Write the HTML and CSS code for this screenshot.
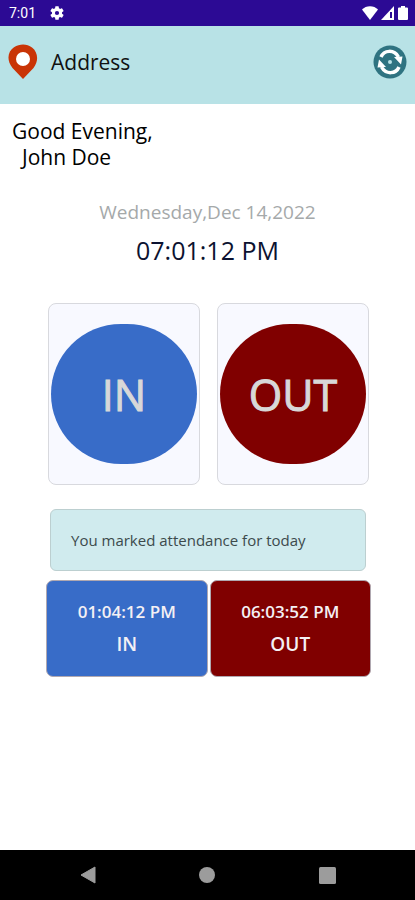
FILE: index.html
```html
<!DOCTYPE html>
<html lang="en">
<head>
    <meta charset="UTF-8">
    <meta name="viewport" content="width=device-width, initial-scale=1.0">
    <title>Attendance</title>
    <link rel="stylesheet" href="styles.css">
</head>
<body>
    <div class="status-bar">
        <span>7:01</span>
        <svg class="gear" width="14" height="14" viewBox="2 2 20 20" fill="#fff"><path d="M19.14 12.94c.04-.3.06-.61.06-.94s-.02-.64-.07-.94l2.03-1.58a.49.49 0 0 0 .12-.61l-1.92-3.32a.49.49 0 0 0-.59-.22l-2.39.96a7 7 0 0 0-1.62-.94l-.36-2.54a.48.48 0 0 0-.48-.41h-3.84a.48.48 0 0 0-.47.41l-.36 2.54c-.59.24-1.13.57-1.62.94l-2.39-.96a.48.48 0 0 0-.59.22L2.74 8.87a.48.48 0 0 0 .12.61l2.03 1.58a6 6 0 0 0 0 1.88l-2.03 1.58a.49.49 0 0 0-.12.61l1.92 3.32c.12.22.37.29.59.22l2.39-.96c.5.38 1.03.7 1.62.94l.36 2.54c.05.24.24.41.48.41h3.84c.24 0 .44-.17.47-.41l.36-2.54a7 7 0 0 0 1.62-.94l2.39.96c.22.08.47 0 .59-.22l1.92-3.32a.48.48 0 0 0-.12-.61zM12 15a3 3 0 1 1 0-6 3 3 0 0 1 0 6z"/></svg>
        <div class="signals">
            <svg width="16" height="14" viewBox="0 0 16 14" fill="#fff"><path d="M0 3.5C4-1 12-1 16 3.500L8 14z"/></svg>
            <svg width="14" height="14" viewBox="0 0 14 14"><path d="M0 14L13 0V14z" fill="#fff"/><path d="M9 6h2v6H9z" fill="#2c0a94"/></svg>
            <svg width="10" height="14" viewBox="0 0 10 14" fill="#fff"><path d="M3 0h4v1.500h2q1 0 1 1V13q0 1-1 1H1q-1 0-1-1V2.500q0-1 1-1h2z"/></svg>
        </div>
    </div>

    <header class="app-bar">
        <svg width="30" height="36" viewBox="0 0 30 36"><path d="M15 35L4.500 24C-2 16 0 7 6 3.200C12-.7 19-.5 24 3.500C30 8 31 17 25.500 24z" fill="#c93406"/><circle cx="15" cy="15" r="7" fill="#fff"/></svg>
        <span class="address">Address</span>
        <button type="button" class="refresh" aria-label="Refresh">
            <svg width="34" height="34" viewBox="0 0 34 34"><circle cx="17" cy="17" r="16.500" fill="#2f7381"/><g fill="none" stroke="#fff" stroke-width="3.500"><path d="M8 12C11 5 21 4 25.500 12"/><path d="M26 22C23 29 13 30 8.500 22"/></g><path d="M21 12L29.500 11.500L28 19.500zM13 22L4.500 22.500L6 14.500z" fill="#fff"/><circle cx="17" cy="17" r="2" fill="#b8e2e6"/></svg>
        </button>
    </header>

    <main>
        <div class="greeting">
            <p>Good Evening,</p>
            <p class="name">John Doe</p>
        </div>

        <p class="date">Wednesday,Dec 14,2022</p>
        <p class="clock">07:01:12 PM</p>

        <div class="cards">
            <div class="card"><button type="button" class="mark in">IN</button></div>
            <div class="card"><button type="button" class="mark out">OUT</button></div>
        </div>

        <p class="notice">You marked attendance for today</p>

        <div class="records">
            <div class="record in"><span class="time">01:04:12 PM</span><span>IN</span></div>
            <div class="record out"><span class="time">06:03:52 PM</span><span>OUT</span></div>
        </div>
    </main>

    <nav class="nav-bar">
        <button type="button" aria-label="Back"><svg width="16" height="18" viewBox="0 0 16 18"><path d="M1 9L15 1V17z" fill="#9c9c9c" stroke="#9c9c9c" stroke-linejoin="round"/></svg></button>
        <button type="button" aria-label="Home"><svg width="16" height="16" viewBox="0 0 16 16"><circle cx="8" cy="8" r="8" fill="#9c9c9c"/></svg></button>
        <button type="button" aria-label="Recent apps"><svg width="17" height="17" viewBox="0 0 17 17"><rect width="17" height="17" rx="1.500" fill="#9c9c9c"/></svg></button>
    </nav>
</body>
</html>
```

FILE: styles.css
```css
* {
    box-sizing: border-box;
}
body {
    display: flex;
    flex-direction: column;
    min-height: 100vh;
    margin: 0;
    background: #fff;
    color: #111;
    font-family: "Open Sans", "Noto Sans", sans-serif;
}
p {
    margin: 0;
}
button {
    padding: 0;
    border: none;
    background: none;
    font-family: inherit;
    cursor: pointer;
}
svg {
    display: block;
}
.status-bar {
    display: flex;
    align-items: center;
    height: 26px;
    padding: 0 7px 0 9px;
    background: #2c0a94;
    color: #fff;
    font-family: Roboto, sans-serif;
    font-size: 14px;
}
.gear {
    margin-left: 14px;
}
.signals {
    display: flex;
    gap: 3px;
    margin-left: auto;
}
.app-bar {
    display: flex;
    align-items: center;
    height: 78px;
    padding: 0 8px 6px;
    background: #b8e2e6;
}
.address {
    margin-left: 13px;
    font-size: 21px;
}
.refresh {
    margin-left: auto;
}
main {
    flex: 1;
}
.greeting {
    padding: 14px 12px 0;
    color: #000;
    font-size: 21px;
    line-height: 26px;
}
.name {
    padding-left: 10px;
}
.date {
    margin-top: 28px;
    color: #a5a9aa;
    font-size: 19px;
    line-height: 28px;
    text-align: center;
}
.clock {
    margin-top: 6px;
    color: #0c1230;
    font-size: 25px;
    line-height: 36px;
    text-align: center;
}
.cards {
    display: grid;
    grid-template-columns: 1fr 1fr;
    gap: 17px;
    margin: 35px 46px 0 48px;
}
.card {
    padding: 20px 2px;
    border: 1px solid #d8d9de;
    border-radius: 8px;
    background: #f8f9ff;
}
.mark {
    display: block;
    width: 100%;
    height: 140px;
    border-radius: 70px;
    color: #d8d8d8;
    font-size: 43px;
    -webkit-text-stroke: 1px #d8d8d8;
}
.in {
    background: #386cc8;
}
.out {
    background: #800000;
}
.notice {
    margin: 24px 49px 0 50px;
    padding: 19px 20px;
    border: 1px solid #bccfd0;
    border-radius: 6px;
    background: #d0ebee;
    color: #3c4a4c;
    font-size: 15px;
    line-height: 22px;
}
.records {
    display: grid;
    grid-template-columns: 1fr 1fr;
    gap: 2px;
    margin: 9px 44px 0 46px;
}
.record {
    display: flex;
    flex-direction: column;
    align-items: center;
    gap: 4px;
    padding: 17px 0 18px;
    border: 1px solid #b0a8b0;
    border-radius: 7px;
    color: #f4f0f4;
    font-size: 19px;
    font-weight: 600;
    line-height: 28px;
}
.time {
    font-size: 17px;
}
.nav-bar {
    display: grid;
    grid-template-columns: repeat(3, 1fr);
    align-items: center;
    justify-items: center;
    height: 50px;
    padding: 0 28px;
    background: #000;
}
```
